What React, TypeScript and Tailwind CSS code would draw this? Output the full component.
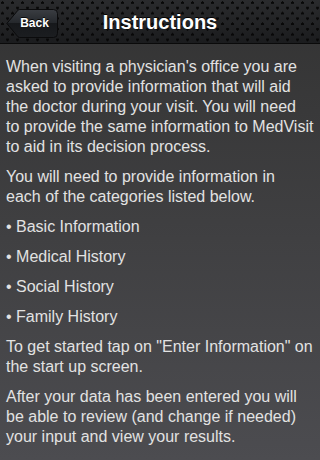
import React from "react";

function BackButton() {
  return (
    <button className="relative w-[52px] h-[29px] flex items-center justify-center pl-[5px]">
      <svg className="absolute inset-0" width="52" height="29" viewBox="0 0 52 29">
        <defs>
          <linearGradient id="bb" x1="0" y1="0" x2="0" y2="1">
            <stop offset="0" stopColor="#3a3d42" />
            <stop offset="0.5" stopColor="#24272b" />
            <stop offset="0.5" stopColor="#16181b" />
            <stop offset="1" stopColor="#1c1e21" />
          </linearGradient>
        </defs>
        <path
          d="M0.8 14.5 L12 1.2 Q12.6 0.5 13.6 0.5 L47.5 0.5 Q51.5 0.5 51.5 4.5 L51.5 24.5 Q51.5 28.5 47.5 28.5 L13.6 28.5 Q12.6 28.5 12 27.8 Z"
          fill="url(#bb)"
          stroke="#0b0b0c"
          strokeWidth="1"
        />
      </svg>
      <span className="relative text-white font-bold text-[12px] leading-none [text-shadow:0_-1px_0_rgba(0,0,0,0.8)]">
        Back
      </span>
    </button>
  );
}

export default function App() {
  return (
    <div className="w-[320px] h-[460px] overflow-hidden flex flex-col font-['Liberation_Sans',Arial,sans-serif] bg-[linear-gradient(to_bottom,#333333,#4c4c50)]">
      <div className="relative h-[44px] shrink-0 flex items-center px-[6px] bg-[linear-gradient(to_bottom,#2a2b2d,#1b1c1e)] border-b border-[#0a0a0a]">
        <div className="absolute inset-0 bg-[radial-gradient(circle_at_2.5px_2.7px,#080808_1.2px,transparent_1.6px),radial-gradient(circle_at_7.5px_8px,#080808_1.2px,transparent_1.6px)] bg-[length:10px_10.6px]" />
        <div className="relative mt-[3px]">
          <BackButton />
        </div>
        <div className="absolute inset-0 flex items-center justify-center pointer-events-none">
          <span className="text-white font-bold text-[20px] leading-none [text-shadow:0_-1px_0_rgba(0,0,0,0.9)]">
            Instructions
          </span>
        </div>
      </div>
      <div className="flex flex-col gap-[10px] pt-[13px] pl-[6px] text-[16px] leading-[20px] text-[#e2e2e2] whitespace-nowrap">
        <p>
          When visiting a physician's office you are
          <br />
          asked to provide information that will aid
          <br />
          the doctor during your visit. You will need
          <br />
          to provide the same information to MedVisit
          <br />
          to aid in its decision process.
        </p>
        <p>
          You will need to provide information in
          <br />
          each of the categories listed below.
        </p>
        <p>• Basic Information</p>
        <p>• Medical History</p>
        <p>• Social History</p>
        <p>• Family History</p>
        <p>
          To get started tap on "Enter Information" on
          <br />
          the start up screen.
        </p>
        <p>
          After your data has been entered you will
          <br />
          be able to review (and change if needed)
          <br />
          your input and view your results.
        </p>
      </div>
    </div>
  );
}
